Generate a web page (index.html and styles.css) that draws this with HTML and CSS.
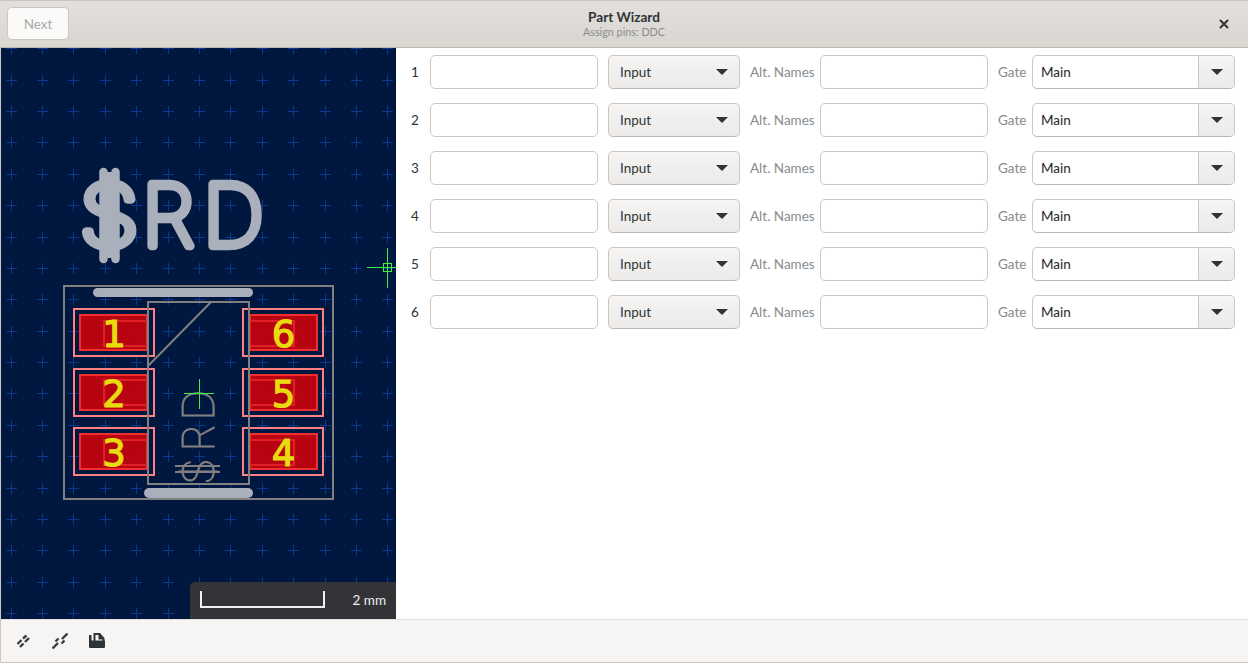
FILE: index.html
```html
<!DOCTYPE html>
<html lang="en">
<head>
  <meta charset="UTF-8" />
  <title>Part Wizard</title>
  <link rel="stylesheet" href="styles.css">
</head>
<body>
  <div class="window">
    <header class="titlebar">
      <button class="next-btn" disabled>Next</button>
      <div class="title-box">
        <div class="title">Part Wizard</div>
        <div class="subtitle">Assign pins: DDC</div>
      </div>
      <svg class="close-icon" width="10" height="10" viewBox="0 0 10 10"><path d="M1 1L9 9M9 1L1 9"/></svg>
    </header>

    <main class="content">
      <div class="canvas">
        <svg class="board" width="395" height="571" viewBox="1 48 395 571">
          <path id="gridCrosses" class="grid-cross" d=""/>

          <text class="silk-big" transform="matrix(1.15 0 0 1 -14 0)" x="81" y="246">$</text>
          <path class="silk-bars" d="M103.5 172V259M115.5 172V259"/>
          <text class="silk-big" x="142" y="246">R</text>
          <text class="silk-big" x="203" y="246">D</text>

          <rect class="outline" x="64" y="286" width="269" height="213"/>
          <rect class="bar" x="93" y="288" width="160" height="9" rx="4.5"/>
          <rect class="bar" x="144" y="488" width="109" height="10" rx="5"/>

          <!-- left pads -->
          <g>
            <rect class="pad-outer" x="74" y="309" width="80" height="47"/>
            <rect class="pad" x="80" y="315" width="67" height="35"/>
            <rect class="paste" x="104" y="321" width="44" height="25"/>
            <text class="pad-num" x="114" y="347">1</text>
          </g>
          <g>
            <rect class="pad-outer" x="74" y="369" width="80" height="47"/>
            <rect class="pad" x="80" y="375" width="67" height="35"/>
            <rect class="paste" x="104" y="380" width="44" height="25"/>
            <text class="pad-num" x="114" y="407">2</text>
          </g>
          <g>
            <rect class="pad-outer" x="74" y="428" width="80" height="47"/>
            <rect class="pad" x="80" y="434" width="67" height="35"/>
            <rect class="paste" x="104" y="440" width="44" height="25"/>
            <text class="pad-num" x="114" y="466">3</text>
          </g>

          <!-- right pads -->
          <g>
            <rect class="pad-outer" x="243" y="309" width="80" height="47"/>
            <rect class="pad" x="250" y="315" width="67" height="35"/>
            <rect class="paste" x="250" y="321" width="44" height="25"/>
            <text class="pad-num" x="283.5" y="347">6</text>
          </g>
          <g>
            <rect class="pad-outer" x="243" y="369" width="80" height="47"/>
            <rect class="pad" x="250" y="375" width="67" height="35"/>
            <rect class="paste" x="250" y="380" width="44" height="25"/>
            <text class="pad-num" x="283.5" y="407">5</text>
          </g>
          <g>
            <rect class="pad-outer" x="243" y="428" width="80" height="47"/>
            <rect class="pad" x="250" y="434" width="67" height="35"/>
            <rect class="paste" x="250" y="440" width="44" height="25"/>
            <text class="pad-num" x="283.5" y="466">4</text>
          </g>

          <rect class="outline" x="148" y="302" width="101" height="182"/>
          <path class="outline-line" d="M148 366L211 302"/>
          <g transform="translate(214 482) rotate(-90)">
            <text class="silk-small" x="-3" y="0">$</text>
            <text class="silk-small" x="30" y="0">R</text>
            <text class="silk-small" x="61" y="0">D</text>
          </g>
          <path class="outline-line" d="M175 466H220M175 472H220"/>

          <path class="cross" d="M184 393.5H214M199.5 379V409"/>
          <path class="cross" d="M367 267.5H396M387.5 248V288"/>
          <rect class="cross" x="383.5" y="263.5" width="8" height="8"/>
        </svg>
        <div class="scale">
          <div class="ruler"></div>
          <span class="scale-label">2 mm</span>
        </div>
      </div>

      <div class="pins">
        <div class="pin-row">
          <span class="pin-num">1</span>
          <input class="entry" type="text">
          <div class="dropdown"><span class="nudge">Input</span><i class="arrow"></i></div>
          <label class="dim alt-label">Alt. Names</label>
          <input class="entry" type="text">
          <label class="dim gate-label">Gate</label>
          <div class="combo"><span class="combo-text">Main</span><span class="combo-btn"><i class="arrow"></i></span></div>
        </div>
        <div class="pin-row">
          <span class="pin-num">2</span>
          <input class="entry" type="text">
          <div class="dropdown"><span class="nudge">Input</span><i class="arrow"></i></div>
          <label class="dim alt-label">Alt. Names</label>
          <input class="entry" type="text">
          <label class="dim gate-label">Gate</label>
          <div class="combo"><span class="combo-text">Main</span><span class="combo-btn"><i class="arrow"></i></span></div>
        </div>
        <div class="pin-row">
          <span class="pin-num">3</span>
          <input class="entry" type="text">
          <div class="dropdown"><span class="nudge">Input</span><i class="arrow"></i></div>
          <label class="dim alt-label">Alt. Names</label>
          <input class="entry" type="text">
          <label class="dim gate-label">Gate</label>
          <div class="combo"><span class="combo-text">Main</span><span class="combo-btn"><i class="arrow"></i></span></div>
        </div>
        <div class="pin-row">
          <span class="pin-num">4</span>
          <input class="entry" type="text">
          <div class="dropdown"><span class="nudge">Input</span><i class="arrow"></i></div>
          <label class="dim alt-label">Alt. Names</label>
          <input class="entry" type="text">
          <label class="dim gate-label">Gate</label>
          <div class="combo"><span class="combo-text">Main</span><span class="combo-btn"><i class="arrow"></i></span></div>
        </div>
        <div class="pin-row">
          <span class="pin-num">5</span>
          <input class="entry" type="text">
          <div class="dropdown"><span class="nudge">Input</span><i class="arrow"></i></div>
          <label class="dim alt-label">Alt. Names</label>
          <input class="entry" type="text">
          <label class="dim gate-label">Gate</label>
          <div class="combo"><span class="combo-text">Main</span><span class="combo-btn"><i class="arrow"></i></span></div>
        </div>
        <div class="pin-row">
          <span class="pin-num">6</span>
          <input class="entry" type="text">
          <div class="dropdown"><span class="nudge">Input</span><i class="arrow"></i></div>
          <label class="dim alt-label">Alt. Names</label>
          <input class="entry" type="text">
          <label class="dim gate-label">Gate</label>
          <div class="combo"><span class="combo-text">Main</span><span class="combo-btn"><i class="arrow"></i></span></div>
        </div>
      </div>
    </main>

    <footer class="toolbar">
      <svg class="tool-icon" width="16" height="16" viewBox="0 0 16 16">
        <path d="M2.5 11L6.5 7M8 5.5L11.5 2.5M5 14L8.5 10.5M10 9L14 5"/>
      </svg>
      <svg class="tool-icon" width="16" height="16" viewBox="0 0 16 16">
        <path d="M0.5 15.5L6 10M3.5 8.5L6.5 5.5M9.5 10.5L12.5 7.5M10 6L15.5 0.5"/>
      </svg>
      <svg class="tool-icon-fill" width="16" height="16" viewBox="0 0 16 16">
        <path fill-rule="evenodd" d="M0 2H2.5V7.5H4.5V0H11L15.5 5V7.5H16V14A1 1 0 0 1 15 15H1A1 1 0 0 1 0 14ZM6.5 2V7.5H13.5V6.5H9.5V2Z"/>
      </svg>
    </footer>
  </div>

  <script>
    // background grid of the board view, snapped to whole pixels
    const pitch = 31.38;
    let d = "";
    for (let i = 0; i < 13; i++) {
      for (let j = 0; j < 19; j++) {
        const x = Math.round(10.7 + i * pitch) + 0.5;
        const y = Math.round(48.3 + j * pitch) + 0.5;
        d += `M${x - 5.5} ${y}H${x + 5.5}M${x} ${y - 5.5}V${y + 5.5}`;
      }
    }
    document.getElementById("gridCrosses").setAttribute("d", d);
  </script>
</body>
</html>
```

FILE: styles.css
```css
* {
  box-sizing: border-box;
}

html, body {
  margin: 0;
  height: 100%;
  overflow: hidden;
}

body {
  font-family: Lato, "Noto Sans", sans-serif;
  font-size: 13.5px;
  color: #2e3436;
  background-color: #fff;
}

.window {
  width: 1248px;
  height: 663px;
  display: flex;
  flex-direction: column;
  border-left: 1px solid #cdc7c2;
  border-bottom: 1px solid #cdc7c2;
}

/* header */
.titlebar {
  position: relative;
  height: 48px;
  margin-left: -1px;
  padding: 6px 7px 0 7px;
  display: flex;
  align-items: flex-start;
  justify-content: space-between;
  border-top: 1px solid #c9c5bf;
  border-bottom: 1px solid #bfb8b1;
  background: linear-gradient(#e3dfdc, #d9d6d1);
}

.next-btn {
  width: 62px;
  height: 33px;
  padding-bottom: 1px;
  font: inherit;
  color: #a9a9a7;
  background-color: #fafaf9;
  border: 1px solid #cdc7c2;
  border-radius: 5px;
}

.title-box {
  position: absolute;
  left: 0;
  right: 0;
  top: 8px;
  text-align: center;
}

.title {
  font-size: 13.6px;
  line-height: 17px;
  font-weight: 700;
}

.subtitle {
  margin-top: -1px;
  font-size: 10.8px;
  line-height: 13px;
  color: #8b8e8f;
}

.close-icon {
  align-self: center;
  margin-right: 12px;
  margin-bottom: 6px;
  stroke: #2e3436;
  stroke-width: 2;
  fill: none;
}

/* main */
.content {
  flex: 1;
  display: flex;
  min-height: 0;
}

.canvas {
  position: relative;
  width: 395px;
  background-color: #00173f;
}

.board {
  display: block;
}

.grid-cross {
  stroke: #0a388f;
  stroke-width: 1;
  fill: none;
  shape-rendering: crispEdges;
}

.silk-big {
  font-family: Inter, "Liberation Sans", sans-serif;
  font-size: 85px;
  font-weight: 100;
  fill: #a9b0bb;
  stroke: #a9b0bb;
  stroke-width: 8.5;
  stroke-linejoin: round;
  stroke-linecap: round;
}

.silk-bars {
  fill: none;
  stroke: #a9b0bb;
  stroke-width: 8.5;
  stroke-linecap: round;
}

.silk-small {
  font-family: Inter, "Liberation Sans", sans-serif;
  font-size: 44px;
  font-weight: 100;
  fill: #808080;
  stroke: #808080;
  stroke-width: 1;
}

.outline {
  fill: none;
  stroke: #808080;
  stroke-width: 2;
}

.outline-line {
  stroke: #808080;
  stroke-width: 2;
  fill: none;
}

.bar {
  fill: #a9b0bb;
}

.pad-outer {
  fill: none;
  stroke: #ff8080;
  stroke-width: 2;
}

.pad {
  fill: #c0040f;
  fill-opacity: 0.96;
  stroke: #f03030;
  stroke-width: 2;
}

.paste {
  fill: none;
  stroke: #e02024;
  stroke-width: 2;
}

.pad-num {
  font-family: "DejaVu Sans", sans-serif;
  font-size: 37px;
  text-anchor: middle;
  fill: #e8dc10;
  stroke: #e8dc10;
  stroke-width: 1.2;
}

.cross {
  fill: none;
  stroke: #40f040;
  stroke-width: 1;
  shape-rendering: crispEdges;
}

/* scale overlay */
.scale {
  position: absolute;
  right: 0;
  bottom: 0;
  width: 206px;
  height: 37px;
  padding: 9px 10px 0 10px;
  display: flex;
  justify-content: space-between;
  align-items: flex-start;
  background-color: #333437;
  border-top-left-radius: 5px;
}

.ruler {
  width: 125px;
  height: 17px;
  border: 2px solid #f0f0f0;
  border-top: none;
}

.scale-label {
  margin-top: 1px;
  line-height: 17px;
  color: #eeeeec;
}

/* pin rows */
.pins {
  flex: 1;
  padding: 7px 13px 0 15px;
  display: flex;
  flex-direction: column;
  gap: 14px;
  background-color: #fff;
}

.pin-row {
  height: 34px;
  display: flex;
  align-items: center;
  gap: 10px;
}

.pin-num {
  width: 7px;
  margin-right: 2px;
  margin-bottom: 1px;
  text-align: center;
  white-space: nowrap;
  color: #2e3436;
}

.entry {
  width: 168px;
  height: 34px;
  border: 1px solid #cdc7c2;
  border-radius: 5px;
  background-color: #fff;
  font: inherit;
}

.dropdown {
  width: 132px;
  height: 34px;
  padding: 0 11px;
  display: flex;
  align-items: center;
  justify-content: space-between;
  border: 1px solid #cdc7c2;
  border-bottom-color: #bfb8b1;
  border-radius: 5px;
  background: linear-gradient(#f6f5f4, #eceae8);
}

.nudge {
  margin-bottom: 1px;
}

.arrow {
  display: block;
  width: 0;
  height: 0;
  border-left: 6px solid transparent;
  border-right: 6px solid transparent;
  border-top: 6px solid #2e3436;
}

.dim {
  margin-bottom: 1px;
  white-space: nowrap;
  color: #878b8c;
}

.alt-label {
  width: 65px;
  margin-right: -5px;
}

.gate-label {
  width: 29px;
  margin-right: -5px;
}

.combo {
  width: 203px;
  height: 34px;
  display: flex;
  border: 1px solid #cdc7c2;
  border-bottom-color: #bfb8b1;
  border-radius: 5px;
  overflow: hidden;
  background-color: #fff;
}

.combo-text {
  flex: 1;
  padding-left: 8px;
  line-height: 32px;
  color: #241f1f;
}

.combo-btn {
  width: 36px;
  display: flex;
  align-items: center;
  justify-content: center;
  border-left: 1px solid #cdc7c2;
  background: linear-gradient(#f6f5f4, #eceae8);
}

/* bottom toolbar */
.toolbar {
  height: 43px;
  padding-left: 14px;
  display: flex;
  align-items: center;
  gap: 21px;
  border-top: 1px solid #e4e1de;
  background-color: #f6f5f3;
}

.tool-icon {
  fill: none;
  stroke: #3a3f40;
  stroke-width: 2.4;
}

.tool-icon-fill {
  fill: #2e3436;
}
```
